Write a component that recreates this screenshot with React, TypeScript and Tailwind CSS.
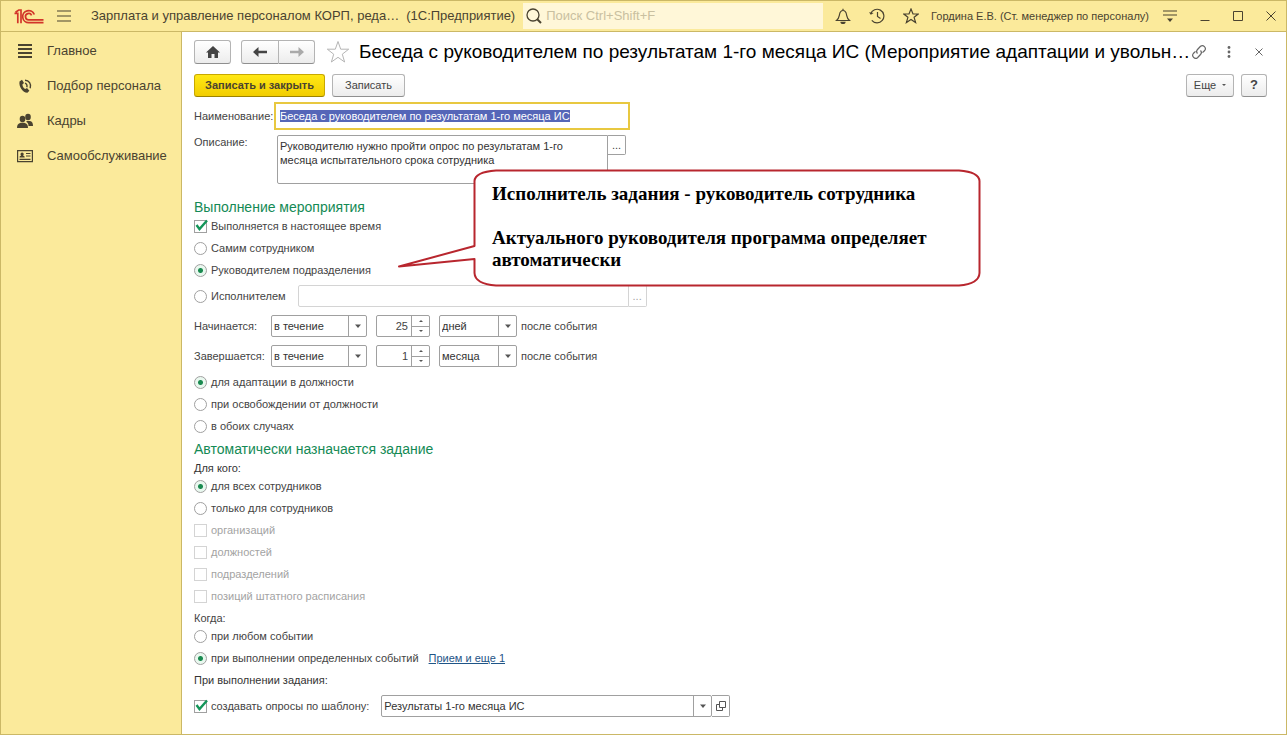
import { useEffect, useRef, useState } from "react";
import type { ReactNode } from "react";

interface OptionProps {
    type: "radio" | "checkbox";
    name: string;
    label: string;
    checked?: boolean;
    disabled?: boolean;
}

const buttonStyle =
    "flex items-center justify-center border border-[#b4b4b4] border-b-[#8f8f8f] rounded-[3px] bg-linear-to-b from-white to-[#ececec] text-[#444] cursor-pointer";

function Option({ type, name, label, checked, disabled }: OptionProps) {
    return (
        <label className={`flex items-center gap-1 h-[22px] w-fit ${disabled ? "text-[#a3a3a3]" : "text-[#444]"}`}>
            <span className="relative flex">
                {type === "radio" ? (
                    <input
                        type="radio"
                        name={name}
                        defaultChecked={checked}
                        className="appearance-none size-[13px] rounded-full border border-[#a0a0a0] bg-white checked:bg-[radial-gradient(circle,#1a8a50_2px,#e9f8ef_3px)]"
                    />
                ) : (
                    <>
                        <input
                            type="checkbox"
                            name={name}
                            defaultChecked={checked}
                            disabled={disabled}
                            className="peer appearance-none size-[13px] border border-[#a0a0a0] bg-white disabled:border-[#d4d4d4]"
                        />
                        <svg viewBox="0 0 14 14" className="absolute top-[-1px] left-0 size-[14px] pointer-events-none hidden peer-checked:block">
                            <path d="M2.5 6 L5.5 10 L13 1.5" fill="none" stroke="#14965a" strokeWidth="2.4" />
                        </svg>
                    </>
                )}
            </span>
            {label}
        </label>
    );
}

function Arrow() {
    return (
        <svg viewBox="0 0 6 4" className="w-[6px] h-[4px]">
            <path d="M0 0.5h6L3 4z" fill="#555" />
        </svg>
    );
}

function Dropdown({ label, value, className }: { label: string; value: string; className: string }) {
    return (
        <div className={`relative h-[22px] ${className}`}>
            <select
                aria-label={label}
                className="appearance-none w-full h-full border border-[#a0a0a0] rounded-[2px] bg-white pl-[2px] text-[#333] outline-none"
            >
                <option>{value}</option>
            </select>
            <span className="absolute right-px inset-y-px w-[18px] border-l border-[#a0a0a0] flex items-center justify-center pointer-events-none">
                <Arrow />
            </span>
        </div>
    );
}

function NumberBox({ label, value }: { label: string; value: string }) {
    const [amount, setAmount] = useState(value);
    const step = (delta: number) => setAmount(String(Number(amount) + delta));

    return (
        <div className="flex w-[54px] h-[22px] border border-[#a0a0a0] rounded-[2px] bg-white">
            <input
                aria-label={label}
                value={amount}
                onChange={(e) => setAmount(e.target.value)}
                className="flex-1 min-w-0 text-right pr-[3px] outline-none"
            />
            <div className="flex flex-col w-[18px] border-l border-[#a0a0a0]">
                <button aria-label="Больше" onClick={() => step(1)} className="flex-1 flex items-center justify-center border-b border-[#a0a0a0]">
                    <svg viewBox="0 0 4 2" className="w-1 h-[2px]"><path d="M0 2h4L2 0z" fill="#555" /></svg>
                </button>
                <button aria-label="Меньше" onClick={() => step(-1)} className="flex-1 flex items-center justify-center">
                    <svg viewBox="0 0 4 2" className="w-1 h-[2px]"><path d="M0 0h4L2 2z" fill="#555" /></svg>
                </button>
            </div>
        </div>
    );
}

function PeriodRow({ label, amount, unit }: { label: string; amount: string; unit: string }) {
    return (
        <div className="flex items-center mt-2">
            <span className="w-[77px]">{label}</span>
            <Dropdown label={label} value="в течение" className="w-24" />
            <div className="mx-[9px]">
                <NumberBox label={label} value={amount} />
            </div>
            <Dropdown label="Единица" value={unit} className="w-[78px]" />
            <span className="ml-1">после события</span>
        </div>
    );
}

function Logo() {
    return (
        <svg viewBox="0 0 30 15" className="w-[30px] h-[15px]" fill="none" stroke="#d2352a" strokeWidth="1.7">
            <path d="M0.5 4.300H3.800V14.200M1.500 3.200L4.800 1H7V14.200" />
            <path d="M20.300 5.500A6 6 0 1 0 15 13.600H29.500" />
            <path d="M17.600 6.300A3.200 3.200 0 1 0 15 10.800H29.500" />
        </svg>
    );
}

function TitleBar() {
    return (
        <header className="flex items-center h-[31px] shrink-0 bg-[#fbea9b] border-b border-[#cbb866] text-[#4a4330]">
            <div className="ml-[13px]">
                <Logo />
            </div>
            <button aria-label="Меню" className="ml-[13px]">
                <svg viewBox="0 0 14 12" className="w-[14px] h-3" stroke="#4a4330" strokeWidth="1.2">
                    <path d="M0 1h14M0 6h14M0 11h14" />
                </svg>
            </button>
            <span className="ml-5 text-[13px] whitespace-nowrap">Зарплата и управление персоналом КОРП, реда…</span>
            <span className="ml-[7px] text-[13px] whitespace-nowrap">(1С:Предприятие)</span>
            <label className="flex items-center flex-1 min-w-0 ml-2 h-[26px] bg-[#fff7d8] px-[3px] gap-1">
                <svg viewBox="0 0 16 16" className="size-4 shrink-0" fill="none" stroke="#4a4330" strokeWidth="1.3">
                    <circle cx="7" cy="7" r="6" />
                    <path d="M11 11l4 4" strokeWidth="2" />
                </svg>
                <input placeholder="Поиск Ctrl+Shift+F" className="flex-1 min-w-0 text-[13px] outline-none placeholder:text-[#c9c0a0]" />
            </label>
            <div className="flex items-center ml-3">
                <button aria-label="Уведомления" className="w-[34px]">
                    <svg viewBox="0 0 16 16" className="size-4" fill="none" stroke="#4a4330" strokeWidth="1.2">
                        <path d="M1.5 12.5h13C12 10.5 12 9 11.5 6.5 11 3.5 10 2.5 8 2.5S5 3.5 4.5 6.5C4 9 4 10.5 1.5 12.5zM8 0.8v1.7" />
                        <path d="M6 14.3a2 1.2 0 0 0 4 0z" fill="#4a4330" />
                    </svg>
                </button>
                <button aria-label="История" className="w-[34px]">
                    <svg viewBox="0 0 16 16" className="size-4" fill="none" stroke="#4a4330" strokeWidth="1.2">
                        <path d="M1.6 6A6.8 6.8 0 1 1 2.8 12.4M8.5 4v4.5l3 2" />
                        <path d="M0 4.2l1.8 2.6L4.6 5z" fill="#4a4330" stroke="none" />
                    </svg>
                </button>
                <button aria-label="Избранное" className="w-7">
                    <svg viewBox="0 0 16 16" className="size-4" fill="none" stroke="#4a4330" strokeWidth="1.2">
                        <path d="M8 1l2 5h5.2l-4.1 3.3 1.5 5.2L8 11.4l-4.6 3.1 1.5-5.2L0.8 6H6z" />
                    </svg>
                </button>
            </div>
            <span className="text-[11px] whitespace-nowrap">Гордина Е.В. (Ст. менеджер по персоналу)</span>
            <div className="flex items-center gap-5 ml-[14px] mr-[10px]">
                <button aria-label="Настройки">
                    <svg viewBox="0 0 14 12" className="w-[14px] h-3" stroke="#4a4330" strokeWidth="1.2">
                        <path d="M0 1h14M0 5h14" />
                        <path d="M4 8.5h6L7 12z" fill="#4a4330" stroke="none" />
                    </svg>
                </button>
                <button aria-label="Свернуть" className="ml-[3px]">
                    <svg viewBox="0 0 10 10" className="size-[10px]" stroke="#4a4330"><path d="M0.5 9.5h9" /></svg>
                </button>
                <button aria-label="Развернуть" className="ml-[3px]">
                    <svg viewBox="0 0 10 10" className="size-[10px]" stroke="#4a4330" fill="none"><path d="M0.500 0.500h9v9h-9z" /></svg>
                </button>
                <button aria-label="Закрыть" className="ml-[3px]">
                    <svg viewBox="0 0 10 10" className="size-[10px]" stroke="#4a4330"><path d="M0.5 0.5l9 9M9.5 0.5l-9 9" /></svg>
                </button>
            </div>
        </header>
    );
}

const sections: { title: string; icon: ReactNode }[] = [
    {
        title: "Главное",
        icon: <path d="M1 2h14M1 6h14M1 10h14M1 14h14" stroke="#4a4330" strokeWidth="2" />,
    },
    {
        title: "Подбор персонала",
        icon: (
            <g fill="none" stroke="#4a4330">
                <path
                    d="M2.5 3.5L5 1.8 7 5 5.4 6.4C5.6 8.4 6.6 10 8.2 11L10 10l2.4 2.8-2 2C6 15 1.6 8.6 2.5 3.5z"
                    fill="#4a4330"
                    stroke="none"
                />
                <path d="M8 5.2a3 3 0 0 1 1.8 4M8 2.2c4 0 6.6 3.6 5.2 8" strokeWidth="1.4" />
            </g>
        ),
    },
    {
        title: "Кадры",
        icon: (
            <g fill="#4a4330">
                <ellipse cx="11" cy="4" rx="2.8" ry="3.3" />
                <path d="M9.5 8h3.5c2 .6 3 2 3 5h-4.5c0-2-.8-3.4-2-4z" />
                <ellipse cx="5.5" cy="6" rx="2.8" ry="3.3" />
                <path d="M0 15c0-3 1-4.5 3.8-5.2h3.4C10 10.5 11 12 11 15z" />
            </g>
        ),
    },
    {
        title: "Самообслуживание",
        icon: (
            <g fill="none" stroke="#4a4330" strokeWidth="1.2">
                <path d="M.6 2.6h14.8v11H.6z" />
                <path d="M9 5.5h4.5M9 8h4.5M2.5 11.4h11" />
                <path d="M2.5 9.5c0-1.6 1-1.9 1.7-2a1.6 1.6 0 1 1 1.8 0c.7.1 1.7.4 1.7 2z" fill="#4a4330" stroke="none" />
            </g>
        ),
    },
];

function Sidebar() {
    return (
        <nav className="w-[181px] shrink-0 bg-[#fbea9b] border-r border-[#cbb866] pt-px text-[13px] text-[#4a4330]">
            {sections.map((section) => (
                <a key={section.title} href="#" className="flex items-center h-[35px] pl-4 gap-[14px]">
                    <svg viewBox="0 0 16 16" className="size-4">{section.icon}</svg>
                    {section.title}
                </a>
            ))}
        </nav>
    );
}

function FormHeader() {
    return (
        <>
            <div className="flex items-center h-6">
                <button aria-label="Начальная страница" className={`${buttonStyle} w-[37px] h-6`}>
                    <svg viewBox="0 0 14 12" className="w-[14px] h-3" fill="#444">
                        <path d="M7 0l7 6.5h-2V12H8.500V8h-3v4H2V6.500H0z" />
                    </svg>
                </button>
                <div className="flex ml-[10px]">
                    <button aria-label="Назад" className={`${buttonStyle} w-[38px] h-6 rounded-r-none`}>
                        <svg viewBox="0 0 14 10" className="w-[14px] h-[10px]">
                            <path d="M0 5l5.500-5v3.700H14v2.600H5.500V10z" fill="#444" />
                        </svg>
                    </button>
                    <button aria-label="Вперед" className={`${buttonStyle} w-9 h-6 rounded-l-none border-l-0`}>
                        <svg viewBox="0 0 14 10" className="w-[14px] h-[10px]">
                            <path d="M14 5L8.500 0v3.700H0v2.600h8.500V10z" fill="#aaa" />
                        </svg>
                    </button>
                </div>
                <button aria-label="В избранное" className="ml-[11px]">
                    <svg viewBox="0 0 24 24" className="size-6" fill="none" stroke="#b5b5b5">
                        <path d="M12 1.500l2.700 7.700h8l-6.400 5 2.300 7.800L12 17.300 5.400 22l2.300-7.800-6.400-5h8z" />
                    </svg>
                </button>
                <h1 className="flex-1 min-w-0 ml-[9px] text-[19px] leading-6 text-black whitespace-nowrap">
                    Беседа с руководителем по результатам 1-го месяца ИС (Мероприятие адаптации и увольн…
                </h1>
                <div className="flex items-center">
                    <button aria-label="Ссылка">
                        <svg viewBox="0 0 16 16" className="size-4" fill="none" stroke="#666" strokeWidth="1.2">
                            <path d="M6.500 9.500a3 3 0 0 1 0-4L9.500 2.300a3 3 0 0 1 4.200 4.200L11.500 8.700" />
                            <path d="M9.500 6.500a3 3 0 0 1 0 4L6.500 13.700a3 3 0 0 1-4.200-4.200L4.500 7.300" />
                        </svg>
                    </button>
                    <button aria-label="Действия" className="ml-5">
                        <svg viewBox="0 0 4 12" className="w-1 h-3" fill="#666">
                            <circle cx="2" cy="1.500" r="1.400" />
                            <circle cx="2" cy="6" r="1.400" />
                            <circle cx="2" cy="10.500" r="1.400" />
                        </svg>
                    </button>
                    <button aria-label="Закрыть форму" className="ml-6 mr-1">
                        <svg viewBox="0 0 8 8" className="size-2" stroke="#666"><path d="M0.500 0.500l7 7M7.500 0.500l-7 7" /></svg>
                    </button>
                </div>
            </div>
            <div className="flex items-center mt-[9px] h-6">
                <button className="h-[23px] w-[131px] rounded-[3px] border border-[#c8a800] border-b-[#9c8300] bg-linear-to-b from-[#ffe814] to-[#f2cd00] font-bold text-[#4a4330] cursor-pointer">
                    Записать и закрыть
                </button>
                <button className={`${buttonStyle} w-[73px] h-[23px] ml-[7px]`}>Записать</button>
                <button className={`${buttonStyle} w-12 h-[23px] ml-auto gap-[6px]`}>
                    Еще
                    <svg viewBox="0 0 4 2" className="w-1 h-[2px]"><path d="M0 0h4L2 2z" fill="#555" /></svg>
                </button>
                <button className={`${buttonStyle} w-[26px] h-[23px] ml-[7px] text-[13px] font-bold`}>?</button>
            </div>
        </>
    );
}

// Hint balloon that hangs over the form
function Callout() {
    return (
        <aside className="absolute left-[216px] top-[137px] w-[583px] h-[118px] px-[94px] pt-[14px] font-['Liberation_Serif',serif] font-bold text-[19px] leading-[22px] text-black">
            <svg viewBox="0 0 583 118" className="absolute inset-0 size-full" fill="white" stroke="#b8262e" strokeWidth="2" strokeLinejoin="round">
                <path d="M98 1.500H561Q581 3 581.500 12V104Q581 115 561 116.500H98Q77 115 76.500 104V90L1 97.500 76.500 77V12Q77 3 98 1.500z" />
            </svg>
            <p className="relative whitespace-nowrap">Исполнитель задания - руководитель сотрудника</p>
            <p className="relative mt-[22px] whitespace-nowrap">
                Актуального руководителя программа определяет
                <br />
                автоматически
            </p>
        </aside>
    );
}

export default function App() {
    const nameRef = useRef<HTMLInputElement>(null);

    useEffect(() => {
        // the name is ready to be typed over when the form opens
        nameRef.current?.focus();
        nameRef.current?.select();
    }, []);

    return (
        <div className="min-h-screen flex flex-col border border-[#cbb866] bg-white font-['Liberation_Sans',Arial,sans-serif] text-[11px] leading-[14px] text-[#444]">
            <TitleBar />
            <div className="flex flex-1">
                <Sidebar />
                <main className="relative flex-1 min-w-0 pl-3 pr-[19px] pt-2 pb-4">
                    <FormHeader />

                    <div className="flex items-center mt-[5px]">
                        <label htmlFor="name" className="w-[80px]">Наименование:</label>
                        <input
                            id="name"
                            ref={nameRef}
                            defaultValue="Беседа с руководителем по результатам 1-го месяца ИС"
                            className="w-[356px] h-7 border-2 border-[#e8c840] px-1 text-[#333] outline-none selection:bg-[#5566b8] selection:text-white"
                        />
                    </div>
                    <div className="flex items-start mt-[5px]">
                        <label htmlFor="description" className="w-[83px]">Описание:</label>
                        <textarea
                            id="description"
                            defaultValue="Руководителю нужно пройти опрос по результатам 1-го месяца испытательного срока сотрудника"
                            className="w-[331px] h-[49px] border border-[#a0a0a0] rounded-l-[2px] pl-[2px] pr-6 pt-[3px] text-[#333] resize-none outline-none"
                        />
                        <button aria-label="Открыть описание" className="w-[18px] h-5 border border-l-0 border-[#a0a0a0] rounded-r-[2px]">...</button>
                    </div>

                    <h2 className="mt-[15px] text-[14px] leading-4 text-[#148a55]">Выполнение мероприятия</h2>
                    <Option type="checkbox" name="active" label="Выполняется в настоящее время" checked />
                    <Option type="radio" name="performer" label="Самим сотрудником" />
                    <Option type="radio" name="performer" label="Руководителем подразделения" checked />
                    <div className="flex items-center mt-1">
                        <Option type="radio" name="performer" label="Исполнителем" />
                        <input aria-label="Исполнитель" disabled className="ml-3 w-[331px] h-[22px] border border-[#d4d4d4] rounded-l-[2px]" />
                        <button aria-label="Выбрать исполнителя" disabled className="w-[18px] h-[22px] border border-l-0 border-[#d4d4d4] rounded-r-[2px] text-[#a3a3a3]">...</button>
                    </div>
                    <PeriodRow label="Начинается:" amount="25" unit="дней" />
                    <PeriodRow label="Завершается:" amount="1" unit="месяца" />
                    <div className="mt-1">
                        <Option type="radio" name="purpose" label="для адаптации в должности" checked />
                        <Option type="radio" name="purpose" label="при освобождении от должности" />
                        <Option type="radio" name="purpose" label="в обоих случаях" />
                    </div>

                    <h2 className="my-1 text-[14px] leading-4 text-[#148a55]">Автоматически назначается задание</h2>
                    <p className="text-[#333]">Для кого:</p>
                    <Option type="radio" name="audience" label="для всех сотрудников" checked />
                    <Option type="radio" name="audience" label="только для сотрудников" />
                    <Option type="checkbox" name="organizations" label="организаций" disabled />
                    <Option type="checkbox" name="positions" label="должностей" disabled />
                    <Option type="checkbox" name="departments" label="подразделений" disabled />
                    <Option type="checkbox" name="staff" label="позиций штатного расписания" disabled />
                    <p className="mt-1">Когда:</p>
                    <Option type="radio" name="moment" label="при любом событии" />
                    <div className="flex items-center gap-[10px]">
                        <Option type="radio" name="moment" label="при выполнении определенных событий" checked />
                        <a href="#" className="text-[#1f5587] underline">Прием и еще 1</a>
                    </div>
                    <p className="mt-1 text-[#333]">При выполнении задания:</p>
                    <div className="flex items-center mt-2">
                        <Option type="checkbox" name="survey" label="создавать опросы по шаблону:" checked />
                        <div className="flex ml-3">
                            <Dropdown label="Шаблон опроса" value="Результаты 1-го месяца ИС" className="w-[331px]" />
                            <button aria-label="Открыть шаблон" className="flex items-center justify-center w-[18px] h-[22px] border border-l-0 border-[#a0a0a0] rounded-r-[2px]">
                                <svg viewBox="0 0 10 10" className="size-[10px]" fill="none" stroke="#555">
                                    <path d="M3.500 0.500h6v6h-6zM3.500 3.500h-3v6h6v-3" />
                                </svg>
                            </button>
                        </div>
                    </div>

                    <Callout />
                </main>
            </div>
        </div>
    );
}
